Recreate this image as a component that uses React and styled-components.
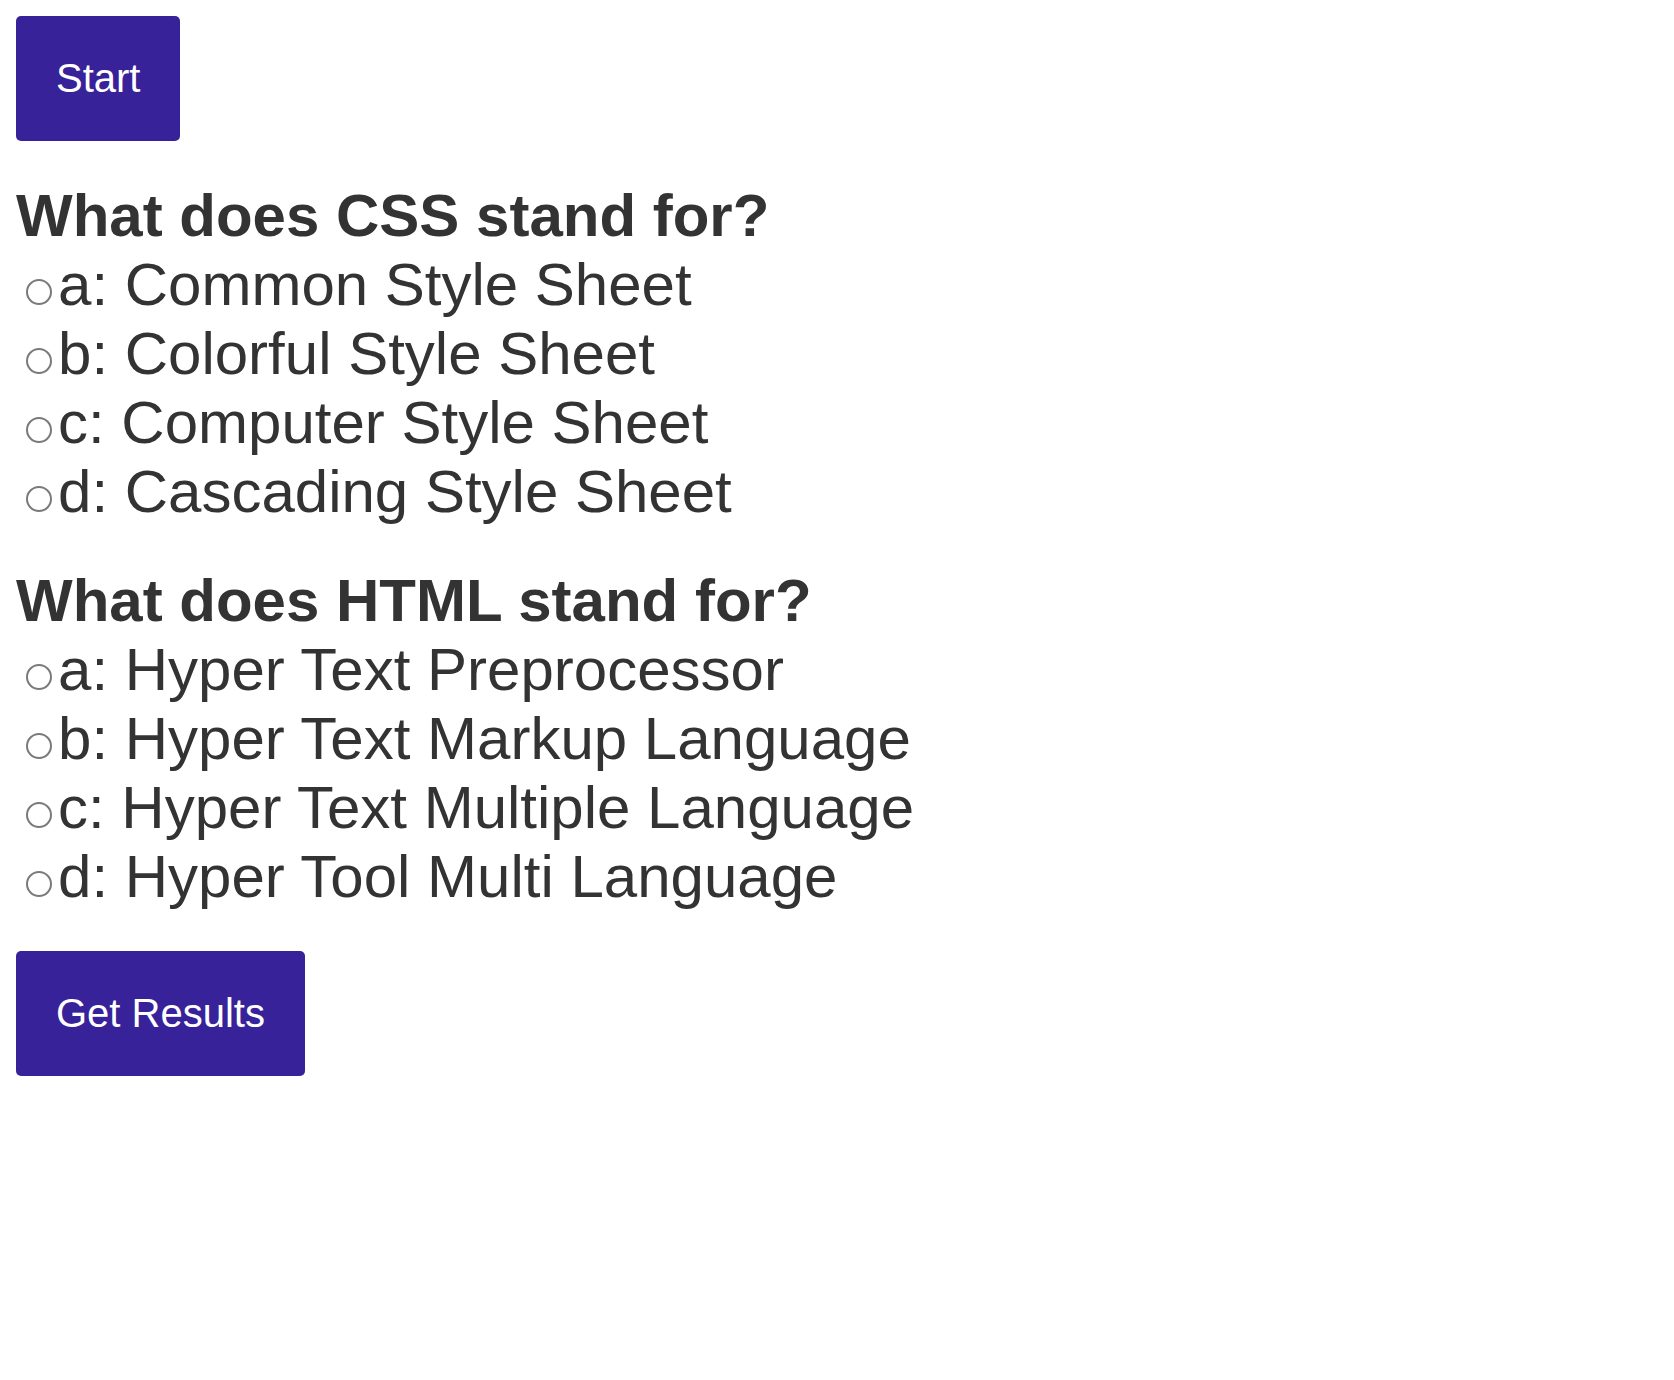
import React from "react";
import styled, { createGlobalStyle } from "styled-components";

const questions = [
  {
    id: "css",
    title: "What does CSS stand for?",
    answers: [
      ["a", "Common Style Sheet"],
      ["b", "Colorful Style Sheet"],
      ["c", "Computer Style Sheet"],
      ["d", "Cascading Style Sheet"],
    ],
  },
  {
    id: "html",
    title: "What does HTML stand for?",
    answers: [
      ["a", "Hyper Text Preprocessor"],
      ["b", "Hyper Text Markup Language"],
      ["c", "Hyper Text Multiple Language"],
      ["d", "Hyper Tool Multi Language"],
    ],
  },
];

function App() {
  return (
    <Container>
      <GlobalStyle />
      <Button>Start</Button>
      {questions.map((q) => (
        <Question key={q.id}>
          <Title>{q.title}</Title>
          {q.answers.map(([letter, text]) => (
            <Answer key={letter}>
              <Radio type="radio" name={q.id} value={letter} />
              {letter}: {text}
            </Answer>
          ))}
        </Question>
      ))}
      <Button>Get Results</Button>
    </Container>
  );
}

const GlobalStyle = createGlobalStyle`
  body {
    margin: 0;
    background: #ffffff;
    font-family: "Liberation Sans", Arial, sans-serif;
  }
`;

const Container = styled.div`
  display: flex;
  flex-direction: column;
  align-items: flex-start;
  gap: 40px;
  padding: 16px;
`;

const Button = styled.button`
  padding: 40px;
  border: none;
  border-radius: 5px;
  background-color: #37229a;
  color: #ffffff;
  font-family: "Liberation Sans", Arial, sans-serif;
  font-size: 40px;
  line-height: normal;
  cursor: pointer;
`;

const Question = styled.div`
  color: #333333;
  font-size: 60px;
  line-height: normal;
`;

const Title = styled.div`
  font-weight: 700;
`;

const Answer = styled.label`
  display: block;
`;

const Radio = styled.input`
  appearance: none;
  width: 26px;
  height: 26px;
  margin: 6px 6px 0 10px;
  border: 2px solid #7a7a7a;
  border-radius: 50%;
  background: #ffffff;
  vertical-align: baseline;
  box-sizing: border-box;
`;

export default App;
